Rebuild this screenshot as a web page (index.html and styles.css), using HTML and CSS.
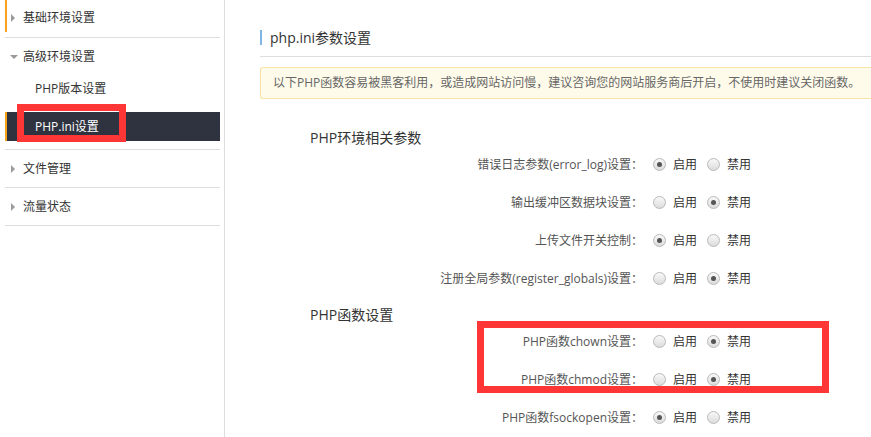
FILE: index.html
```html
<!DOCTYPE html>
<html lang="zh-CN">

<head>
	<meta charset="UTF-8">
	<title>php.ini参数设置</title>
	<link rel="stylesheet" href="styles.css">
</head>

<body>
	<div class="sidebar">
		<div class="nav-group">
			<div class="nav-head marked"><span class="arrow right"></span>基础环境设置</div>
		</div>
		<div class="nav-group open">
			<div class="nav-head"><span class="arrow down"></span>高级环境设置</div>
			<div class="nav-sub">PHP版本设置</div>
			<div class="nav-sub active">PHP.ini设置</div>
			<div class="mark mark-nav"></div>
		</div>
		<div class="nav-group">
			<div class="nav-head"><span class="arrow right"></span>文件管理</div>
		</div>
		<div class="nav-group">
			<div class="nav-head"><span class="arrow right"></span>流量状态</div>
		</div>
	</div>

	<div class="main">
		<h2 class="page-title"><span>php.ini参数设置</span></h2>
		<div class="notice">以下PHP函数容易被黑客利用，或造成网站访问慢，建议咨询您的网站服务商后开启，不使用时建议关闭函数。</div>

		<h3 class="section-title">PHP环境相关参数</h3>
		<div class="row">
			<label class="row-label">错误日志参数(error_log)设置：</label>
			<span class="radio checked"></span><span class="opt">启用</span>
			<span class="radio"></span><span class="opt">禁用</span>
		</div>
		<div class="row">
			<label class="row-label">输出缓冲区数据块设置：</label>
			<span class="radio"></span><span class="opt">启用</span>
			<span class="radio checked"></span><span class="opt">禁用</span>
		</div>
		<div class="row">
			<label class="row-label">上传文件开关控制：</label>
			<span class="radio checked"></span><span class="opt">启用</span>
			<span class="radio"></span><span class="opt">禁用</span>
		</div>
		<div class="row">
			<label class="row-label">注册全局参数(register_globals)设置：</label>
			<span class="radio"></span><span class="opt">启用</span>
			<span class="radio checked"></span><span class="opt">禁用</span>
		</div>

		<h3 class="section-title second">PHP函数设置</h3>
		<div class="row">
			<label class="row-label">PHP函数chown设置：</label>
			<span class="radio"></span><span class="opt">启用</span>
			<span class="radio checked"></span><span class="opt">禁用</span>
		</div>
		<div class="row">
			<label class="row-label">PHP函数chmod设置：</label>
			<span class="radio"></span><span class="opt">启用</span>
			<span class="radio checked"></span><span class="opt">禁用</span>
		</div>
		<div class="row">
			<label class="row-label">PHP函数fsockopen设置：</label>
			<span class="radio checked"></span><span class="opt">启用</span>
			<span class="radio"></span><span class="opt">禁用</span>
		</div>
	</div>

	<div class="mark mark-rows"></div>
</body>

</html>
```

FILE: styles.css
```css
/*
  Page frame
*/
html,
body {
	margin: 0;
	height: 100%;
	overflow: hidden;
}

body {
	display: flex;
	background: #fff;
	color: #333;
	font-family: "Microsoft YaHei", "Open Sans", "Noto Sans CJK SC", sans-serif;
	font-size: 12px;
}

/*
  Left navigation
*/
.sidebar {
	width: 215px;
	flex: none;
	padding: 0 4px 0 5px;
	border-right: 1px solid #ddd;
	min-height: 100%;
}

.nav-group {
	border-bottom: 1px solid #ddd;
	position: relative;
}

.nav-group.open {
	padding-bottom: 8px;
}

.nav-head {
	height: 37px;
	line-height: 37px;
	padding-left: 6px;
	color: #333;
}

.open .nav-head {
	height: 38px;
	line-height: 38px;
}

.nav-head.marked {
	background: linear-gradient(#f7a21b, #f7a21b) no-repeat left top / 2px 32px;
	line-height: 36px;
}

.arrow {
	display: inline-block;
	width: 0;
	height: 0;
	margin-right: 8px;
	vertical-align: middle;
}

.arrow.right {
	border-top: 4px solid transparent;
	border-bottom: 4px solid transparent;
	border-left: 4px solid #9a9a9a;
	margin-left: 0;
	margin-right: 8px;
	position: relative;
	top: -1px;
}

.arrow.down {
	border-left: 4px solid transparent;
	border-right: 4px solid transparent;
	border-top: 4px solid #9a9a9a;
	margin-left: -1px;
	margin-right: 5px;
	position: relative;
	top: -1px;
}

.nav-sub {
	height: 26px;
	line-height: 26px;
	padding-left: 30px;
	color: #333;
	margin-bottom: 10px;
}

.nav-sub.active {
	height: 29px;
	line-height: 29px;
	margin-bottom: 0;
	background: #2f333f;
	color: #fff;
	box-shadow: inset 2px 0 #f7a21b;
}

/*
  Red annotation frames drawn over the screenshot
*/
.mark {
	position: absolute;
	border: 7px solid #ff3636;
	box-sizing: border-box;
}

.mark-nav {
	left: 12px;
	top: 66px;
	width: 109px;
	height: 38px;
}

.mark-rows {
	left: 477px;
	top: 321px;
	width: 352px;
	height: 72px;
}

/*
  Main content
*/
.main {
	flex: 1;
	padding: 26px 0 0 35px;
	min-width: 0;
}

.page-title {
	margin: 0;
	height: 20px;
	line-height: 20px;
	padding-bottom: 10px;
	border-bottom: 1px solid #ddd;
	font-size: 14px;
	font-weight: normal;
	color: #333;
}

.page-title span {
	display: inline-block;
	line-height: 15px;
	border-left: 2px solid #80b4e2;
	padding-left: 8px;
	vertical-align: middle;
}

.notice {
	margin-top: 10px;
	height: 30px;
	line-height: 30px;
	padding-left: 12px;
	background: #fffbeb;
	border: 1px solid #fbe3a6;
	border-right: none;
	border-radius: 3px 0 0 3px;
	color: #666;
	white-space: nowrap;
}

.section-title {
	margin: 32px 0 0 50px;
	line-height: 14px;
	font-size: 14px;
	font-weight: normal;
	color: #333;
}

.section-title.second {
	margin-top: 11px;
}

.row {
	display: flex;
	align-items: center;
	height: 38px;
}

.row-label {
	width: 383px;
	text-align: right;
	color: #555;
	white-space: nowrap;
}

.radio {
	width: 11px;
	height: 11px;
	border: 1px solid #b9b9b9;
	border-radius: 50%;
	background: linear-gradient(#f8f8f8, #dcdcdc);
	margin-left: 10px;
	position: relative;
	flex: none;
}

.opt + .radio {
	margin-left: 10px;
}

.radio.checked::after {
	content: "";
	position: absolute;
	left: 3px;
	top: 3px;
	width: 5px;
	height: 5px;
	border-radius: 50%;
	background: #555;
}

.opt {
	margin-left: 7px;
	color: #333;
}
```
